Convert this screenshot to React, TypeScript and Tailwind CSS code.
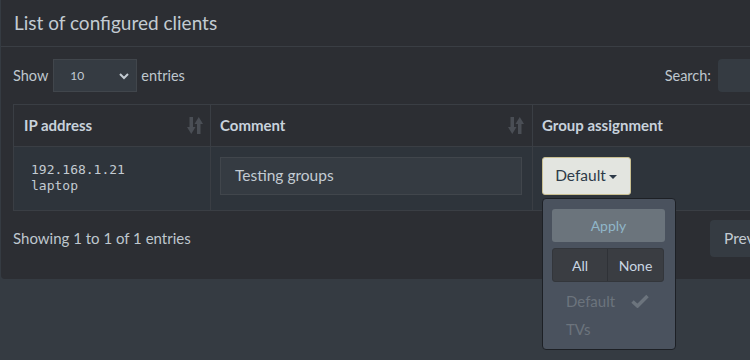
import React from "react";

const SortIcon = () => (
  <svg width="16" height="17" viewBox="0 0 16 17" className="shrink-0">
    <g fill="#4a4e55">
      <rect x="2.5" y="0" width="3.5" height="11" />
      <polygon points="0,10 8.5,10 4.25,17" />
      <rect x="10" y="6" width="3.5" height="11" />
      <polygon points="7.5,7 16,7 11.75,0" />
    </g>
  </svg>
);

export default function App() {
  const font = { fontFamily: "Lato, 'Noto Sans', sans-serif" };
  return (
    <div
      className="w-[750px] h-[360px] overflow-hidden bg-[#353b42] relative"
      style={font}
    >
      <div className="pl-[1px]">
        <div className="w-[800px] bg-[#2c2e33] rounded-b-[4px] text-[#bfc7ce]">
          <div className="h-[47px] border-b border-[#3a3e44] flex items-center px-[13px] pt-[1px]">
            <h3 className="text-[19px] text-[#c3cbd2]">List of configured clients</h3>
          </div>
          <div className="px-[12px] pb-[14px]">
            <div className="flex items-center h-[33px] mt-[12px] mb-[12px] text-[14.5px]">
              <span>Show</span>
              <div className="ml-[5px] w-[84px] h-[33px] bg-[#353b42] border border-[#41464c] flex items-center justify-between pl-[16px] pr-[6px] text-[12px]">
                <span className="text-[#c3cbd2]">10</span>
                <svg width="12" height="12" viewBox="0 0 12 12">
                  <path d="M2 4 L6 8 L10 4" stroke="#c3cbd2" strokeWidth="2" fill="none" />
                </svg>
              </div>
              <span className="ml-[4px]">entries</span>
              <div className="flex-1" />
              <span className="mr-[7px]">Search:</span>
              <div className="w-[120px] h-[33px] bg-[#353b42] rounded-[4px] mr-[-49px]" />
            </div>
            <div className="border-t border-l border-[#3a3e44] w-[790px]">
              <div className="flex h-[42px] border-b border-[#3a3e44] text-[15px] font-bold text-[#c8d2dc]">
                <div className="w-[197px] border-r border-[#3a3e44] flex items-center justify-between pl-[10px] pr-[7px]">
                  <span>IP address</span>
                  <SortIcon />
                </div>
                <div className="w-[322px] border-r border-[#3a3e44] flex items-center justify-between pl-[9px] pr-[8px]">
                  <span>Comment</span>
                  <SortIcon />
                </div>
                <div className="flex-1 flex items-center pl-[9px]">
                  <span>Group assignment</span>
                </div>
              </div>
              <div className="flex h-[64px] border-b border-[#3a3e44] bg-[#2e343b]">
                <div
                  className="w-[197px] border-r border-[#3a3e44] pl-[17px] pt-[15px] text-[13px] leading-[16px] text-[#c3cbd2]"
                  style={{ fontFamily: "'DejaVu Sans Mono', monospace" }}
                >
                  <div>192.168.1.21</div>
                  <div>laptop</div>
                </div>
                <div className="w-[322px] border-r border-[#3a3e44] pl-[9px] pt-[10px]">
                  <div className="w-[302px] h-[38px] bg-[#353b42] border border-[#41464c] flex items-center pl-[14px] text-[15.5px] text-[#c3cbd2]">
                    Testing groups
                  </div>
                </div>
                <div className="flex-1 pl-[9px] pt-[10px] relative">
                  <div className="w-[89px] h-[38px] bg-[#e3e5e0] border border-[#c9bf92] rounded-[3px] flex items-center justify-center text-[15.5px] text-[#2d3a48]">
                    <span>Default</span>
                    <svg width="10" height="6" viewBox="0 0 10 6" className="ml-[2px] mt-[1px]">
                      <polygon points="1,1 9,1 5,5" fill="#2d3a48" />
                    </svg>
                  </div>
                  <div className="absolute left-[9px] top-[51px] w-[134px] h-[152px] bg-[#4a525e] border border-[#1d2025] rounded-[4px] z-10 px-[9px] pt-[10px]">
                    <div className="w-[113px] h-[33px] bg-[#6b747c] rounded-[3px] flex items-center justify-center text-[14px] text-[#90b6c8]">
                      Apply
                    </div>
                    <div className="mt-[6px] w-[112px] h-[34px] flex bg-[#3a3d42] border border-[#33363b] rounded-[3px] text-[14px] text-[#c9d6e2]">
                      <div className="w-[55px] border-r border-[#2f3237] flex items-center justify-center">All</div>
                      <div className="flex-1 flex items-center justify-center">None</div>
                    </div>
                    <div className="pl-[14px] mt-[6px] text-[15px] text-[#6c747d]">
                      <div className="h-[26px] flex items-center">
                        <span>Default</span>
                        <svg width="18" height="14" viewBox="0 0 18 14" className="ml-[16px]">
                          <path d="M1.5 7.5 L6.5 12 L16.5 2" stroke="#6c747d" strokeWidth="3.5" fill="none" />
                        </svg>
                      </div>
                      <div className="h-[30px] flex items-center">TVs</div>
                    </div>
                  </div>
                </div>
              </div>
            </div>
            <div className="flex items-center h-[45px] mt-[9px] w-[738px]">
              <span className="text-[15px] mb-[8px]">Showing 1 to 1 of 1 entries</span>
              <div className="flex-1" />
              <div className="w-[60px] h-[37px] bg-[#353b42] rounded-[4px] flex items-center pl-[14px] text-[15.5px] text-[#c3cbd2] mr-[-19px] mb-[8px] overflow-hidden whitespace-nowrap">
                Previous
              </div>
            </div>
          </div>
        </div>
      </div>
    </div>
  );
}
